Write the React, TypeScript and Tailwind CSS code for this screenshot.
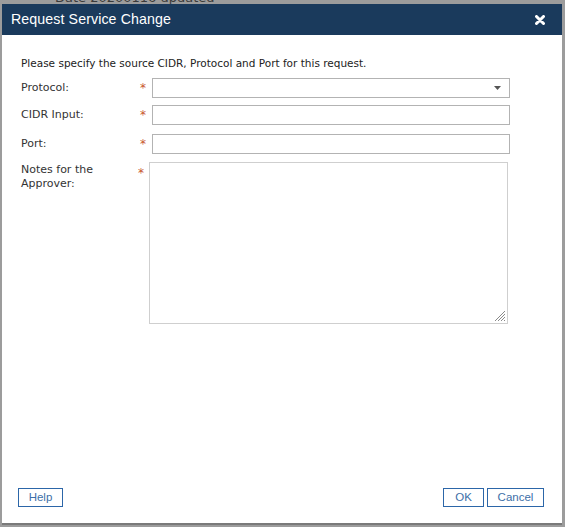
import { FC } from "react";

const Star: FC = () => (
  <span className="block w-[12px] text-[#c8562e] text-[12px] leading-[12px]">*</span>
);

const App: FC = () => {
  const labelCls = "text-[11px] text-[#333] leading-[14px]";
  const inputCls = "h-[20px] border border-[#b3b3b3] bg-white w-[358px]";

  return (
    <div
      className="w-[565px] h-[527px] bg-[#9c9c9c] flex flex-col overflow-hidden"
      style={{ fontFamily: '"DejaVu Sans", Verdana, sans-serif' }}
    >
      {/* page behind the overlay */}
      <div className="h-[4px] overflow-hidden pl-[55px]">
        <div className="-mt-[9px] text-[13px] text-[#3a3a3a] leading-[14px]">
          Date 20200116 updated
        </div>
      </div>

      <div className="ml-[2px] w-[560px] h-[519px] bg-white flex flex-col shadow-[0_2px_0_#7a7a7a]">
        <div className="h-[31px] bg-[#1a3a5c] flex items-center justify-between pl-[9px] pr-[17px]">
          <span
            className="text-white text-[14.2px] tracking-[0.1px]"
            style={{ fontFamily: '"Liberation Sans", Arial, sans-serif' }}
          >
            Request Service Change
          </span>
          <svg width="10" height="10" viewBox="0 0 10 10">
            <path
              d="M1.5 1.5 L8.5 8.5 M8.5 1.5 L1.5 8.5"
              stroke="white"
              strokeWidth="3"
              strokeLinecap="round"
            />
          </svg>
        </div>

        <div className="flex-1 flex flex-col pl-[19px] text-[11px] leading-[14px]">
          <p className="mt-[21px] text-[10.5px] text-[#222] leading-[14px]">
            Please specify the source CIDR, Protocol and Port for this request.
          </p>

          <div className="mt-[8px] h-[19px] flex items-center">
            <span className={`${labelCls} w-[119px]`}>Protocol:</span>
            <Star />
            <div className={`${inputCls} h-[19px] flex items-center justify-end pr-[8px]`}>
              <svg width="7" height="4" viewBox="0 0 7 4">
                <path d="M0 0 L7 0 L3.5 4 Z" fill="#555" />
              </svg>
            </div>
          </div>

          <div className="mt-[8px] h-[20px] flex items-center">
            <span className={`${labelCls} w-[119px]`}>CIDR Input:</span>
            <Star />
            <div className={inputCls} />
          </div>

          <div className="mt-[9px] h-[20px] flex items-center">
            <span className={`${labelCls} w-[119px]`}>Port:</span>
            <Star />
            <div className={inputCls} />
          </div>

          <div className="mt-[8px] flex items-start">
            <span className={`${labelCls} w-[117px] mt-[1px]`}>
              Notes for the
              <br />
              Approver:
            </span>
            <span className="w-[11px] mt-[5px] block">
              <span className="block text-[#c8562e] text-[12px] leading-[12px]">*</span>
            </span>
            <div className="relative w-[359px] h-[162px] border border-[#cfcfcf] bg-white">
              <svg
                className="absolute right-[1px] bottom-[1px]"
                width="12"
                height="12"
                viewBox="0 0 12 12"
              >
                <path
                  d="M11 1 L1 11 M11 4 L4 11 M11 7 L7 11 M11 10 L10 11"
                  stroke="#8a8a8a"
                  strokeWidth="1"
                />
              </svg>
            </div>
          </div>
        </div>

        <div
          className="flex items-center justify-between pl-[16px] pr-[18px] pb-[16px]"
          style={{ fontFamily: '"Liberation Sans", Arial, sans-serif' }}
        >
          <button className="w-[45px] h-[19px] border border-[#2c66a8] text-[#3d6fa8] text-[11.5px] leading-none">
            Help
          </button>
          <div className="flex gap-[3px]">
            <button className="w-[41px] h-[19px] border border-[#2c66a8] text-[#3d6fa8] text-[11.5px] leading-none">
              OK
            </button>
            <button className="w-[57px] h-[19px] border border-[#2c66a8] text-[#3d6fa8] text-[11.5px] leading-none">
              Cancel
            </button>
          </div>
        </div>
      </div>
    </div>
  );
};

export default App;
